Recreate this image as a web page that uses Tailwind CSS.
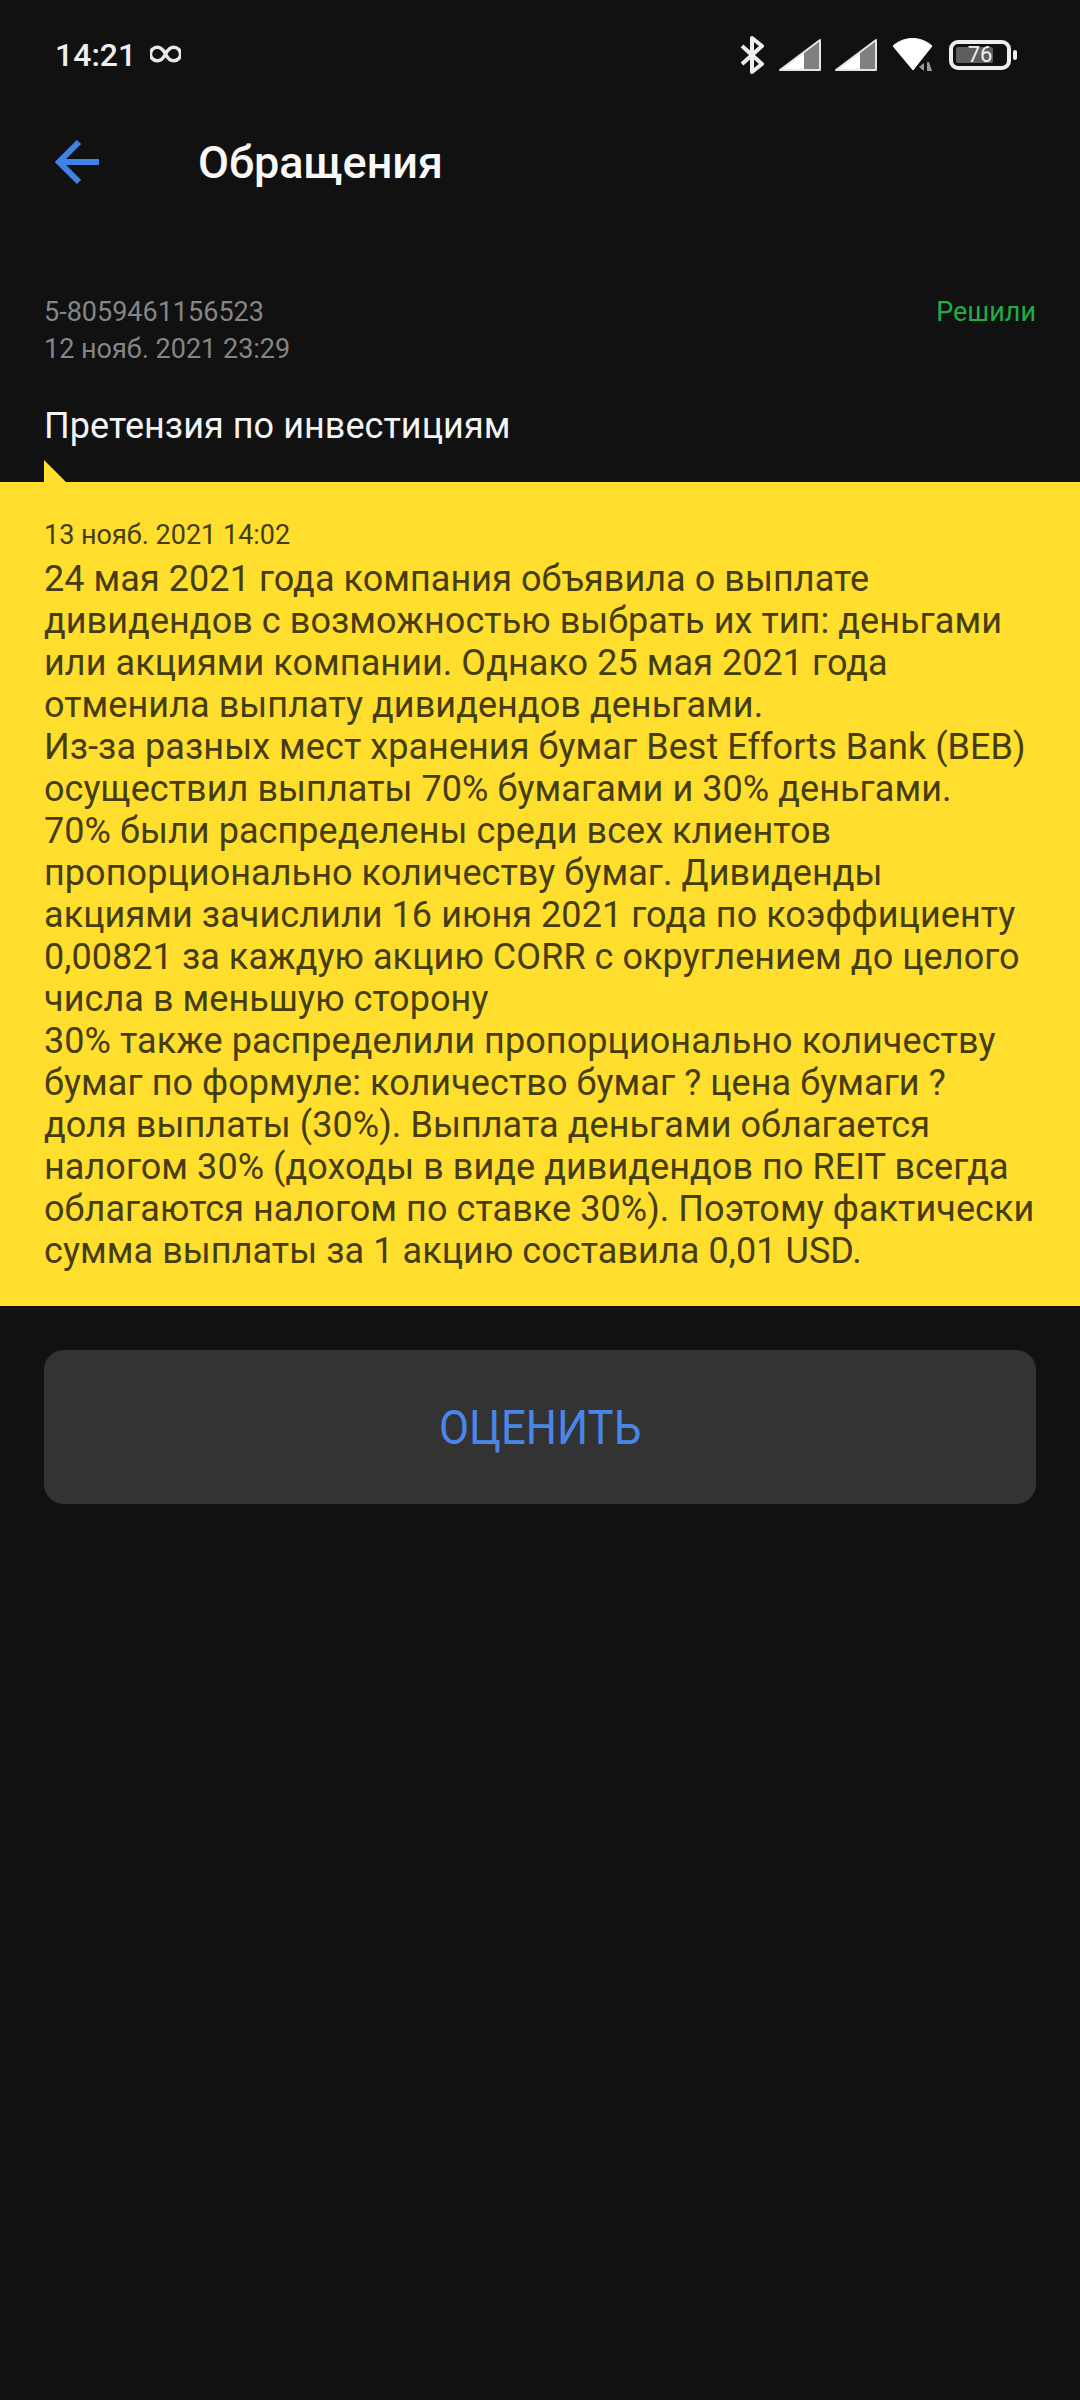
<!DOCTYPE html>
<html lang="ru">
  <head>
    <meta charset="UTF-8" />
    <meta name="viewport" content="width=device-width, initial-scale=1.0" />
    <script src="https://cdn.jsdelivr.net/npm/@tailwindcss/browser@4"></script>
    <title>Обращения</title>
  </head>
  <body class="bg-[#111112] h-[2400px] w-[1080px] overflow-hidden font-[Roboto,sans-serif]">
    <!-- status bar -->
    <div class="h-[110px] flex items-center justify-between pl-[55px] pr-[63px]">
      <div class="flex items-center gap-[14px] text-[#eeeeee]">
        <span class="text-[32px] font-medium leading-none">14:21</span>
        <svg width="31" height="20" viewBox="0 0 34 20" fill="none" stroke="#e8e8e8" stroke-width="3.800" class="-mt-[2px]">
          <path d="M17 10C14 4 11 2.500 8 2.500a7.500 7.500 0 0 0 0 15c3 0 6-1.500 9-7.500c3-6 6-7.500 9-7.500a7.500 7.500 0 0 1 0 15c-3 0-6-1.500-9-7.500z" />
        </svg>
      </div>
      <div class="flex items-center">
        <svg width="24" height="38" viewBox="0 0 24 38" fill="none" stroke="#eeeeee" stroke-width="4" class="mr-[15px]">
          <path d="M2 10l20 18-10 8V2l10 8L2 28" stroke-linejoin="round" />
        </svg>
        <svg width="42" height="32" viewBox="0 0 42 32" class="mr-[14px]">
          <path d="M1 31L41 1v30z" fill="#808080" />
          <path d="M1 31L25 13V31z" fill="#ffffff" />
          <path d="M1 31L41 1v30z" fill="none" stroke="#e4e4e4" stroke-width="2" stroke-linejoin="round" />
        </svg>
        <svg width="42" height="32" viewBox="0 0 42 32" class="mr-[16px]">
          <path d="M1 31L41 1v30z" fill="#808080" />
          <path d="M1 31L25 13V31z" fill="#ffffff" />
          <path d="M1 31L41 1v30z" fill="none" stroke="#e4e4e4" stroke-width="2" stroke-linejoin="round" />
        </svg>
        <svg width="40" height="34" viewBox="0 0 40 34" class="mr-[16px]">
          <path d="M0 8C11-2 28-2 39 8L20 32z" fill="#ffffff" stroke="#ffffff" stroke-linejoin="round" />
          <path d="M31 25l-5 4 5 4zM34 24h2l3 9h-5z" fill="#9a9a9a" stroke="#111112" stroke-width="1.500" paint-order="stroke" />
        </svg>
        <div class="relative w-[62px] h-[30px] border-[4px] border-[#eeeeee] rounded-[9px] flex items-center p-[3px]">
          <div class="h-[16px] w-[37px] bg-[#5e5e5e] rounded-[2px]"></div>
          <span class="absolute inset-0 flex items-center justify-center text-[22px] leading-none text-[#eeeeee]">76</span>
        </div>
        <div class="ml-[2px] w-[4px] h-[10px] bg-[#eeeeee] rounded-[2px]"></div>
      </div>
    </div>

    <!-- toolbar -->
    <div class="h-[104px] flex items-center pl-[55px]">
      <svg width="44" height="46" viewBox="0 0 44 46" fill="none" stroke="#4083e8" stroke-width="6">
        <path d="M44 23H4M24 3L4 23l20 20" />
      </svg>
      <h1 class="ml-[99px] text-[45px] font-medium leading-none text-[#f8f8f8]">Обращения</h1>
    </div>

    <!-- ticket header -->
    <div class="mt-[80px] px-[44px] flex justify-between">
      <div class="text-[27px] leading-[37px] text-[#858585]">
        <div>5-8059461156523</div>
        <div>12 нояб. 2021 23:29</div>
      </div>
      <div class="text-[27px] leading-[37px] text-[#1fae45]">Решили</div>
    </div>
    <div class="mt-[36px] px-[44px] text-[36px] leading-[44px] tracking-[0.05px] text-[#f4f4f4]">Претензия по инвестициям</div>

    <!-- answer bubble -->
    <div class="relative mt-[34px] bg-[#ffde2e] pt-[37px] pb-[34px] px-[44px] text-[#453d10]">
      <div class="absolute left-[44px] -top-[22px] w-[23px] h-[23px] bg-[#ffde2e] [clip-path:polygon(0_0,100%_100%,0_100%)]"></div>
      <div class="text-[27px] leading-[32px]">13 нояб. 2021 14:02</div>
      <p class="mt-[7px] text-[36px] leading-[42px] tracking-[0.06px] whitespace-nowrap">
        24 мая 2021 года компания объявила о выплате<br />
        дивидендов с возможностью выбрать их тип: деньгами<br />
        или акциями компании. Однако 25 мая 2021 года<br />
        отменила выплату дивидендов деньгами.<br />
        Из-за разных мест хранения бумаг Best Efforts Bank (BEB)<br />
        осуществил выплаты 70% бумагами и 30% деньгами.<br />
        70% были распределены среди всех клиентов<br />
        пропорционально количеству бумаг. Дивиденды<br />
        акциями зачислили 16 июня 2021 года по коэффициенту<br />
        0,00821 за каждую акцию CORR с округлением до целого<br />
        числа в меньшую сторону<br />
        30% также распределили пропорционально количеству<br />
        бумаг по формуле: количество бумаг ? цена бумаги ?<br />
        доля выплаты (30%). Выплата деньгами облагается<br />
        налогом 30% (доходы в виде дивидендов по REIT всегда<br />
        облагаются налогом по ставке 30%). Поэтому фактически<br />
        сумма выплаты за 1 акцию составила 0,01 USD.
      </p>
    </div>

    <!-- rate button -->
    <div class="mt-[44px] mx-[44px] h-[154px] pt-[2px] rounded-[20px] bg-[#333333] flex items-center justify-center text-[48px] text-[#4a86e8]">
      <span class="scale-x-[0.91]">ОЦЕНИТЬ</span>
    </div>
  </body>
</html>
